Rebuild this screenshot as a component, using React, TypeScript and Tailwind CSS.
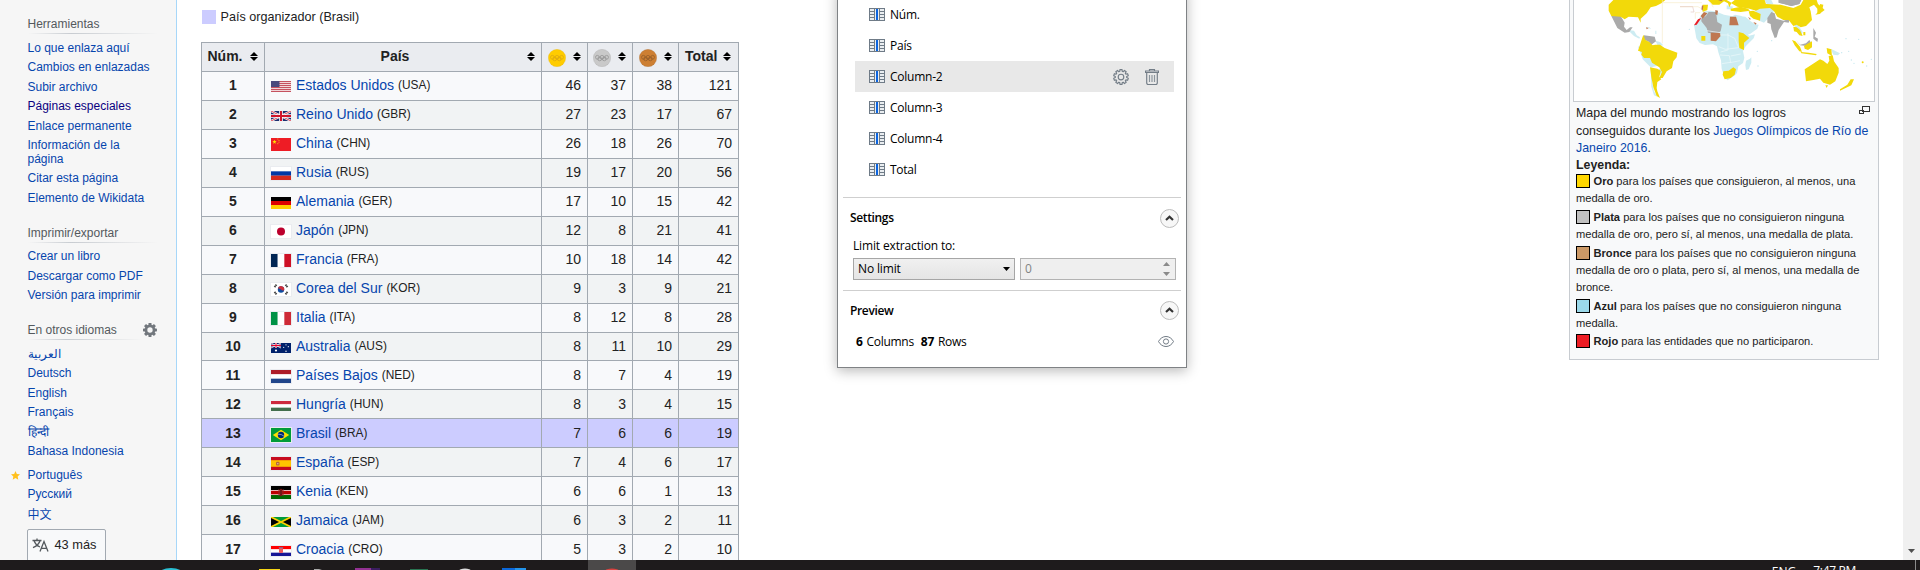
import React from "react";

type SideItem = { label: string; visited?: boolean; lang?: string };

const TOOLS: SideItem[] = [
  { label: "Lo que enlaza aquí" },
  { label: "Cambios en enlazadas" },
  { label: "Subir archivo" },
  { label: "Páginas especiales", visited: true },
  { label: "Enlace permanente" },
  { label: "Información de la página" },
  { label: "Citar esta página" },
  { label: "Elemento de Wikidata" },
];

const PRINT: SideItem[] = [
  { label: "Crear un libro" },
  { label: "Descargar como PDF" },
  { label: "Versión para imprimir" },
];

function SideHeading({ children, short }: { children: React.ReactNode; short?: boolean }) {
  return (
    <div className={short ? "w-[116px]" : "w-[130px]"}>
      <h3 className="h-4 whitespace-nowrap leading-[14px] text-[#54595d]">{children}</h3>
      <div className="h-px bg-gradient-to-r from-[#f6f6f6] via-[#c8ccd1] via-33% to-[#f6f6f6]" />
    </div>
  );
}

function SideLink({ item }: { item: SideItem }) {
  return (
    <li className={`w-[125px] py-[3px] leading-[13.5px] ${item.visited ? "text-[#0b0080]" : "text-[#0645ad]"}`}>
      {item.label}
    </li>
  );
}

function Sidebar() {
  return (
    <aside className="h-full w-[177px] shrink-0 overflow-hidden border-r border-[#a7d7f9] bg-[#f6f6f6] pl-[27.5px] pt-[17px] text-xs">
      <section className="h-[209px]">
        <SideHeading>Herramientas</SideHeading>
        <ul className="pt-[4.9px]">{TOOLS.map((i) => <SideLink key={i.label} item={i} />)}</ul>
      </section>
      <section className="h-[97px]">
        <SideHeading>Imprimir/exportar</SideHeading>
        <ul className="pt-1">{PRINT.map((i) => <SideLink key={i.label} item={i} />)}</ul>
      </section>
      <section>
        <div className="flex justify-between pr-[19px]">
          <SideHeading short>En otros idiomas</SideHeading>
          <svg className="h-[14px] w-[14px]" viewBox="0 0 14 14">
            <g fill="#72777d">
              {[0, 45, 90, 135].map((a) => (
                <rect key={a} x="5.5" y="0" width="3" height="14" rx=".5" transform={`rotate(${a} 7 7)`} />
              ))}
              <circle cx="7" cy="7" r="5.4" />
            </g>
            <circle cx="7" cy="7" r="2.7" fill="#f6f6f6" />
          </svg>
        </div>
        <ul className="pt-[4.9px] text-[#0645ad]">
          <li className="h-[19.5px] py-[3px] leading-[13.5px]">العربية</li>
          <li className="h-[19.5px] py-[3px] leading-[13.5px]">Deutsch</li>
          <li className="h-[19.5px] py-[3px] leading-[13.5px]">English</li>
          <li className="h-[19.5px] py-[3px] leading-[13.5px]">Français</li>
          <li className="h-[19.5px] py-[3px] leading-[13.5px]">हिन्दी</li>
          <li className="h-[19.5px] py-[3px] leading-[13.5px]">Bahasa Indonesia</li>
          <li className="-ml-[17px] mt-[4px] flex h-[19.5px] items-center leading-[13.5px]">
            <svg className="mr-2 h-[9px] w-[9px]" viewBox="0 0 10 10">
              <path d="M5 0l1.5 3.3 3.5.4-2.6 2.4.7 3.6L5 7.9 1.9 9.700l.7-3.600L0 3.700l3.500-.4z" fill="#ffc01f" />
            </svg>
            Português
          </li>
          <li className="h-[19.5px] py-[3px] leading-[13.5px]">Русский</li>
          <li className="h-[24px] pt-[4px] leading-[13.5px]">中文</li>
        </ul>
        <button className="-ml-px flex h-[34px] w-[79px] items-center rounded-[2px] border border-[#a2a9b1] bg-[#f8f9fa] pb-[3px] pl-1 text-[12.8px] text-[#222]">
          <svg className="mr-[6px] mt-[2px] h-4 w-[17px]" viewBox="0 0 17 16" fill="none" stroke="#54595d" strokeWidth="1.3">
            <path d="M.5 3.500h9M5 1.500v2M2 3.500c1 3 3.500 5.500 6 6.500M8.200 3.500C7 7 4 9.500 1 10.700" />
            <path d="M8 14.500l4-10 4 10M9.500 11.300h5.200" />
          </svg>
          43 más
        </button>
      </section>
    </aside>
  );
}

function FlagArt({ code, h }: { code: string; h: number }) {
  const stripes = (c: string[]) =>
    c.map((f, i) => <rect key={i} y={(i * h) / c.length} width="20" height={h / c.length + 0.05} fill={f} />);
  const bars = (c: string[]) => c.map((f, i) => <rect key={i} x={(i * 20) / 3} width="6.8" height={h} fill={f} />);
  switch (code) {
    case "USA":
      return (
        <>
          <rect width="20" height="11" fill="#f1d5d8" />
          {[0, 1, 2, 3, 4, 5].map((i) => <rect key={i} y={i * 2} width="20" height="1" fill="#c5525f" />)}
          <rect width="8.5" height="6" fill="#4a4a7d" />
        </>
      );
    case "GBR":
      return (
        <>
          <rect width="20" height="10" fill="#1d2f6f" />
          <path d="M0 0l20 10M20 0L0 10" stroke="#fff" strokeWidth="2.2" />
          <path d="M0 0l20 10M20 0L0 10" stroke="#cf142b" strokeWidth=".8" />
          <path d="M10 0v10M0 5h20" stroke="#fff" strokeWidth="3.6" />
          <path d="M10 0v10M0 5h20" stroke="#cf142b" strokeWidth="2" />
        </>
      );
    case "CHN":
      return (
        <>
          <rect width="20" height="13" fill="#ee1c25" />
          <path d="M3.500 1.700l.6 1.400 1.500.1-1.200 1 .4 1.500-1.300-.8-1.300.8.4-1.500-1.200-1 1.500-.1z" fill="#ffde00" />
          <path d="M6.300 1h1M7.500 2.500h1M7.500 4.200h1M6.300 5.700h1" stroke="#f7a818" />
        </>
      );
    case "RUS":
      return <>{stripes(["#fff", "#0039a6", "#d52b1e"])}</>;
    case "GER":
      return <>{stripes(["#000", "#d00", "#ffce00"])}</>;
    case "JPN":
      return <><rect width="20" height="13" fill="#fff" /><circle cx="10" cy="6.500" r="4" fill="#bc002d" /></>;
    case "FRA":
      return <>{bars(["#002654", "#fff", "#ce1126"])}</>;
    case "KOR":
      return (
        <>
          <rect width="20" height="13" fill="#fff" />
          <circle cx="10" cy="6.500" r="3.200" fill="#0f4da0" />
          <path d="M6.900 5.700a3.200 3.200 0 016.300 1.200c-1 1.200-2.300.5-3.200-.4s-2.200-1.300-3.100-.8z" fill="#cd2e3a" />
          <path d="M3.500 4.200l2-2.600M16.500 4.200l-2-2.600M3.500 8.800l2 2.600M16.500 8.800l-2 2.600" stroke="#444" strokeWidth="1.900" strokeDasharray="1.500 .3" />
        </>
      );
    case "ITA":
      return <>{bars(["#009246", "#fff", "#ce2b37"])}</>;
    case "AUS":
      return (
        <>
          <rect width="20" height="10" fill="#00216b" />
          <path d="M0 0l10 5M10 0L0 5" stroke="#e9c9d3" strokeWidth="1" />
          <path d="M5 0v5M0 2.500h10" stroke="#fff" strokeWidth="1.800" />
          <path d="M5 0v5M0 2.500h10" stroke="#e4002b" strokeWidth="1" />
          <g fill="#fff"><circle cx="5" cy="7.500" r="1.100" /><circle cx="15" cy="1.800" r=".6" /><circle cx="12.700" cy="4.300" r=".6" /><circle cx="17.300" cy="3.700" r=".6" /><circle cx="15" cy="8.200" r=".7" /></g>
        </>
      );
    case "NED":
      return <>{stripes(["#ae1c28", "#fff", "#21468b"])}</>;
    case "HUN":
      return <>{stripes(["#cd2a3e", "#fff", "#436f4d"])}</>;
    case "BRA":
      return (
        <>
          <rect width="20" height="14" fill="#009b3a" />
          <path d="M1.800 7L10 1.700 18.200 7 10 12.300z" fill="#fedf00" />
          <circle cx="10" cy="7" r="3.200" fill="#002776" />
          <path d="M7 6.200q3.500-.3 6 2" stroke="#cfe0e8" strokeWidth=".6" fill="none" />
        </>
      );
    case "ESP":
      return (
        <>
          <rect width="20" height="13" fill="#c60b1e" /><rect y="3.200" width="20" height="6.600" fill="#ffc400" />
          <rect x="5" y="4.800" width="3.500" height="3.800" rx="1" fill="#b5663a" /><rect x="6.200" y="6" width="1.200" height="1.300" fill="#e8c0a0" />
        </>
      );
    case "KEN":
      return (
        <>
          <rect width="20" height="13" fill="#000" /><rect y="4" width="20" height="5" fill="#fff" /><rect y="9" width="20" height="4" fill="#060" />
          <rect y="4.700" width="20" height="3.700" fill="#b00" />
          <ellipse cx="10" cy="6.500" rx="1.900" ry="3.700" fill="#a11" /><path d="M10 3v7" stroke="#222" strokeWidth=".8" />
          <path d="M7.700 3v7M12.300 3v7" stroke="#7d2c2c" strokeWidth=".6" />
        </>
      );
    case "JAM":
      return (
        <>
          <rect width="20" height="10" fill="#009b3a" /><path d="M0 0l10 5L0 10zM20 0L10 5l10 5z" fill="#000" />
          <path d="M0 0l20 10M20 0L0 10" stroke="#fed100" strokeWidth="1.700" />
        </>
      );
    default:
      return (
        <>
          {stripes(["#f00", "#fff", "#171796"])}
          <rect x="8" y="2" width="4" height="5" rx="1" fill="#f05a5a" /><path d="M7.800 1.800h4.400" stroke="#6a7fb5" strokeWidth="1" />
        </>
      );
  }
}

type Row = [string, string, number, number, number, number, number, number, boolean];
const ROWS: Row[] = [
  ["Estados Unidos", "USA", 46, 37, 38, 121, 10, 11, false],
  ["Reino Unido", "GBR", 27, 23, 17, 67, 11, 10, false],
  ["China", "CHN", 26, 18, 26, 70, 9, 13, false],
  ["Rusia", "RUS", 19, 17, 20, 56, 9, 13, true],
  ["Alemania", "GER", 17, 10, 15, 42, 10, 12, false],
  ["Japón", "JPN", 12, 8, 21, 41, 9, 13, true],
  ["Francia", "FRA", 10, 18, 14, 42, 9, 13, true],
  ["Corea del Sur", "KOR", 9, 3, 9, 21, 9, 13, true],
  ["Italia", "ITA", 8, 12, 8, 28, 9, 13, true],
  ["Australia", "AUS", 8, 11, 10, 29, 11, 10, false],
  ["Países Bajos", "NED", 8, 7, 4, 19, 10, 13, true],
  ["Hungría", "HUN", 8, 3, 4, 15, 12, 10, false],
  ["Brasil", "BRA", 7, 6, 6, 19, 10, 14, true],
  ["España", "ESP", 7, 4, 6, 17, 10, 13, true],
  ["Kenia", "KEN", 6, 6, 1, 13, 10, 13, true],
  ["Jamaica", "JAM", 6, 3, 2, 11, 12, 10, false],
  ["Croacia", "CRO", 5, 3, 2, 10, 12, 10, true],
];

function Sort() {
  return (
    <svg className="h-[9px] w-2 shrink-0" viewBox="0 0 8 9"><path d="M4 0l4 4H0zM0 5h8L4 9z" fill="#000" /></svg>
  );
}

function Medal({ fill, line }: { fill: string; line: string }) {
  return (
    <svg className="mt-[3px] h-[18px] w-[18px]" viewBox="0 0 18 18">
      <circle cx="9" cy="9" r="8.700" fill={fill} stroke={line} strokeOpacity=".4" strokeWidth=".5" />
      <g fill="none" stroke={line} strokeWidth=".7">
        <circle cx="4.400" cy="8.300" r="1.900" /><circle cx="9" cy="8.300" r="1.900" /><circle cx="13.600" cy="8.300" r="1.900" />
        <circle cx="6.700" cy="9.900" r="1.900" /><circle cx="11.300" cy="9.900" r="1.900" />
      </g>
    </svg>
  );
}

const GRID = "grid grid-cols-[63px_277px_46px_45px_46px_61px]";
const CELL = "border-l border-t border-[#a2a9b1]";

function MedalTable() {
  return (
    <div className="w-[538px] text-sm text-[#222]">
      <div className={`${GRID} h-[29px] bg-[#eaecf0] font-bold leading-[20px]`}>
        <div className={`${CELL} flex items-center justify-between pb-[2px] pl-[5.5px] pr-[6px]`}>Núm.<Sort /></div>
        <div className={`${CELL} flex items-center pb-[2px] pr-[6px]`}><span className="flex-1 pr-[2px] text-center">País</span><Sort /></div>
        <div className={`${CELL} flex items-center justify-between pb-[2px] pl-[6px] pr-[6px]`}><Medal fill="#fc0" line="#d9a514" /><Sort /></div>
        <div className={`${CELL} flex items-center justify-between pb-[2px] pl-[5px] pr-[6px]`}><Medal fill="#c9c9c9" line="#8f8f8f" /><Sort /></div>
        <div className={`${CELL} flex items-center justify-between pb-[2px] pl-[6px] pr-[6px]`}><Medal fill="#cd7f32" line="#8f5a28" /><Sort /></div>
        <div className={`${CELL} flex items-center justify-between border-r pb-[2px] pl-[6px] pr-[7px]`}>Total<Sort /></div>
      </div>
      {ROWS.map(([name, code, g, s, b, t, top, h, framed], i) => (
        <div
          key={code}
          className={`${GRID} ${i === 9 ? "h-[28px]" : "h-[29px]"} ${i > 9 ? "leading-[29px]" : "leading-[27px]"} ${
            code === "BRA" ? "bg-[#ccccff]" : i % 2 ? "bg-[#f1f3f4]" : "bg-[#f8f9fb]"
          }`}
        >
          <div className={`${CELL} text-center font-bold`}>{i + 1}</div>
          <div className={`${CELL} flex whitespace-nowrap pl-[6px]`}>
            <svg
              className={`mr-[5px] w-5 shrink-0 ${framed ? "outline outline-1 outline-[#eaecf0]" : ""}`}
              style={{ height: h, marginTop: top - 1 }}
              viewBox={`0 0 20 ${h}`}
            >
              <FlagArt code={code} h={h} />
            </svg>
            <span className="text-[#0645ad]">{name}</span>
            <span className="ml-1 text-[11.9px]">({code})</span>
          </div>
          <div className={`${CELL} pr-[6px] text-right`}>{g}</div>
          <div className={`${CELL} pr-[6px] text-right`}>{s}</div>
          <div className={`${CELL} pr-[6px] text-right`}>{b}</div>
          <div className={`${CELL} border-r pr-[6px] text-right`}>{t}</div>
        </div>
      ))}
    </div>
  );
}

function ColumnIcon() {
  return (
    <svg className="h-[13px] w-4" viewBox="0 0 16 13" shapeRendering="crispEdges">
      <rect width="16" height="13" fill="#6f7b87" />
      <path d="M1 1h4v2H1zM1 4h4v2H1zM1 7h4v2H1zM1 10h4v2H1zM11 1h4v2h-4zM11 4h4v2h-4zM11 7h4v2h-4zM11 10h4v2h-4z" fill="#e9edf0" />
      <rect x="6" y="1" width="4" height="11" fill="#e9edf0" />
      <rect x="7" y="1" width="2" height="11" fill="#0a64e0" />
    </svg>
  );
}

function GearIcon() {
  const pts: string[] = [];
  for (let i = 0; i < 10; i++) {
    const a = (i * Math.PI) / 5 - Math.PI / 2;
    for (const [r, d] of [[5.7, -0.22], [7.4, -0.15], [7.4, 0.15], [5.7, 0.22]]) {
      pts.push(`${8 + r * Math.cos(a + d)},${8 + r * Math.sin(a + d)}`);
    }
  }
  return (
    <svg className="h-4 w-4" viewBox="0 0 16 16" fill="none" stroke="#737d87" strokeWidth="1.150">
      <polygon points={pts.join(" ")} strokeLinejoin="round" />
      <circle cx="8" cy="8" r="2.800" />
    </svg>
  );
}

function TrashIcon() {
  return (
    <svg className="h-4 w-[14px]" viewBox="0 0 14 16" fill="none" stroke="#737d87" strokeWidth="1.150">
      <path d="M.5 3.500V2h13v1.500zM4.500 2V.5h5V2M1.700 3.500v10.600q0 1.400 1.400 1.400h7.800q1.400 0 1.400-1.400V3.500" />
      <path d="M4.500 6v7M7 6v7M9.500 6v7" stroke="#8c959d" />
    </svg>
  );
}

function CollapseButton() {
  return (
    <button className="flex h-[19px] w-[19px] items-center justify-center rounded-full border border-[#bcbcbc] bg-[#f7f7f7]">
      <svg className="h-[7px] w-[9px]" viewBox="0 0 9 7" fill="none" stroke="#333" strokeWidth="2.200"><path d="M1 5l3.500-3.200L8 5" /></svg>
    </button>
  );
}

function ExtractionDialog() {
  const cols = ["Núm.", "País", "Column-2", "Column-3", "Column-4", "Total"];
  return (
    <div className="absolute -top-3 left-[837px] h-[380px] w-[350px] border border-[#7f8285] bg-white px-[5px] pt-[10px] font-['Open_Sans','Noto_Sans',sans-serif] text-xs text-black shadow-[0_3px_12px_rgba(0,0,0,0.28)]">
      <ul className="h-[198px] pl-3 pr-[7px]">
        {cols.map((c, i) => (
          <li key={c} className={`flex h-[31px] items-center pl-[14px] pr-[15px] tracking-[-0.25px] ${i === 2 ? "bg-[#e8e8e8]" : ""}`}>
            <ColumnIcon />
            <span className="ml-[5px] flex-1">{c}</span>
            {i === 2 && <span className="flex items-center gap-4"><GearIcon /><TrashIcon /></span>}
          </li>
        ))}
      </ul>
      <section className="h-[93px] border-t border-[#cfcfcf] px-[7px] pt-[10px]">
        <div className="flex h-5 items-center justify-between">
          <h2 className="font-semibold tracking-[-0.35px]">Settings</h2>
          <div className="-mr-[5px]"><CollapseButton /></div>
        </div>
        <div className="pl-[3px] pt-[7px] leading-[22px] tracking-[-0.15px]">Limit extraction to:</div>
        <div className="-mr-[5px] flex gap-[5px] pl-[3px] pt-[1px]">
          <div className="flex h-[22px] w-[162px] shrink-0 items-center justify-between border border-[#a6a6a6] bg-gradient-to-b from-[#f0f0f0] to-[#e5e5e5] pl-1 pr-1">
            <span className="tracking-[-0.15px]">No limit</span>
            <svg className="h-1 w-[7px]" viewBox="0 0 7 4"><path d="M0 0h7L3.500 4z" fill="#000" /></svg>
          </div>
          <div className="flex h-[22px] w-[156px] shrink-0 items-center justify-between border border-[#b3b3b3] bg-[#efefef] pl-1 pr-[5px] text-[#838383]">
            0
            <svg className="h-[14px] w-[7px]" viewBox="0 0 7 14" fill="#8a8a8a"><path d="M0 4h7L3.500 0zM0 10h7l-3.500 4z" /></svg>
          </div>
        </div>
      </section>
      <section className="border-t border-[#cfcfcf] px-[7px] pt-[9.5px]">
        <div className="flex h-5 items-center justify-between">
          <h2 className="font-semibold tracking-[-0.35px]">Preview</h2>
          <div className="-mr-[5px]"><CollapseButton /></div>
        </div>
        <div className="flex items-center justify-between pl-[6px] pt-[12px] leading-[18px] tracking-[-0.3px]">
          <span className="flex"><b className="mr-1">6</b>Columns<b className="ml-[7px] mr-1">87</b>Rows</span>
          <svg className="h-[11px] w-4" viewBox="0 0 16 11" fill="none" stroke="#737d87">
            <path d="M.5 5.500C4-1.200 12-1.200 15.500 5.500 12 12.200 4 12.200.5 5.500z" /><circle cx="8" cy="5.500" r="2.600" />
          </svg>
        </div>
      </section>
    </div>
  );
}

function WorldMap() {
  return (
    <svg className="h-[101px] w-[300px] bg-white" viewBox="42 0 900 303">
      <g fill="#cdecf2">
        <path d="M402 75l12-15 10-16 10-10 18-2 20 4 20 8 25 5 8-5 20 4 2 25 12 22 8 12 18-4-4 12-24 24-8 14 4 20-4 16-14 10-4 20-8 8-20 14-8-6-10-28-2-26 -8-24-4-18-12-6-24 2-16-6-10-14z" />
        <path d="M558 182l12-6 4-4 0 16-8 20-8 2-2-14zM536 48l20 2 14 12 14 10 12 2-4 12-22 16-14 4-10-14-10-28z" />
        <path d="M578 24l30-10 30 8 4 12-14 18-16 16-14-6-14-34zM500 16l20 4-6 8-14 0zM614 0h20l6 12-18 4zM700 70l12 2 16 24-4 10-12-14zM812 146l28 14-6 6-14-2zM286 122l14 4 10 10-16 2z" />
        <path d="M234 140l20-4 10 26 20 8 10 14-4 14-16 4 2 22 0 20 6 30 10 16-10-4-8-26-2-58-24-24-6-18zM296 206l10 0 4 16-8 6zM204 90l18 2 8 14 10 6-2 4-16-8z" />
        <path d="M262 82l6 0 6 4-12-2zM286 92h3v10h-3z" />
      </g>
      <g fill="#aaa">
        <path d="M154 46l28 2 12 20-2 12 8 10 10-8 8 0-10 14-14 2-22-14-18-36z" />
        <path d="M252 106l32 4 4 14-14 10-10-10-12-4zM424 56l14-8 8-12 22 0 4 30 14 8-4 20-12 8-26-4-4-14-16-20z" />
        <path d="M622 54l12-18 10 4 4 16 22 6 20-6-4 12-14-2-16 24-6 22-6 2-10-26-2-16-10-4zM656 0h68l-6 12-24 6-22-6-16-4zM708 120l12 14 18-4 10-10 4 6-12 12-20-2zM760 84l8 14-4 12 10 6-2 10-12-10z" />
      </g>
      <g fill="#f2d90a">
        <path d="M160 0h156l-12 10-16 8-16 4-12 18-18 16 0 12-8-16-28-2-12 8-12-8-28-2-8-16 0-18zM250 104l6 16 12 6 10 10 8-2 14 0 14 10 38 14-2 14-10 12-4 20-16 10-12 20-10 0 8-18-8-14-22-14-6-14-18 0-8-10 2-8-12-4z" />
        <path d="M270 202l22 4 10 6-2 10-2 8 6 8-12 8-2 18 2 10 8 20-10-6-10-26-6-30z" />
        <path d="M428 14l16 0-2 16-14 6zM444 0h56l14 8 10-8h90l4 12 44 2 38 10 22-10 8-14h40l4 12 10 8-2 20-10 2 0-16-10-12-14 8 4 12 4 26-18 18-16 4-12-8-10 4-14-18-16 0-18-10-10-16 -12-10-30 2-12 6-20-6-36-6-18-10-6 12-4-12-12-6-14 10-20 0z" />
        <path d="M512 26l30-6 22 6 6 6-28 4-30-4zM566 34l14-2 22 10-2 20-20-6-10-8zM536 96l14 4 18 14-16 14 0 22-14-6-2-20zM424 108h12v14h-12zM490 214l16-2 14-10 8 6-4 16-12 10-18 4-6-14z" />
        <path d="M734 208l30-20 16-10 10 4 12 10 6-10-2-14 12-2 4 18 14 20 0 14-10 26-16 10-20-6-10-12-20 4-22 4zM872 238h10l-8 18-34 16 0-4 22-14zM796 256l8 0-4 8zM700 80l10 2 10 8 8 18-10-2-8-10-8-2zM696 120l10 4 14 16 6 16-8-2-14-18zM732 138l16-10 8-4 0 18-12 8-10-4zM722 156l24 2 24 4-2 4-44-6zM800 144l14 4 2 20-14-8zM730 96h6v10h-6zM780 12l10 2-2 10 6 6-16 12-12 2 12-12z" />
      </g>
      <g fill="#bf7751">
        <path d="M422 48l10-12 10 4-14 16zM426 16l4 2-2 14-4-4zM452 98l28 0 2 10-14 16-16-2zM510 50h18l8 26h-28zM466 30l8 2-2 14-6-4zM564 50l8 6-2 4zM580 66l10 4-4 4zM258 82l8 2-6 4zM474 0h14l-4 4z" />
      </g>
      <path d="M402 76l12-18 10-4-14 20z" fill="#ed1c24" />
      <path d="M656 0h68l-6 12-24 6-22-6-16-4z" fill="#aaa" />
      <path d="M307 0v130M360 20h54l10 6M406 56V38h14M306 8h120M450 6l10 16" fill="none" stroke="#f5e9c4" strokeWidth="1.800" />
      <path d="M360 20h38l4 16h-10" fill="none" stroke="#e0c2bc" strokeWidth="1.800" />
      <path d="M480 105l24 0 20 10 12 28-40 5-20-8M504 100v50l-22 6M480 165l28 2 4 20-26 4M512 168l30-6M510 188l30-6M440 92l40 6" fill="none" stroke="#eef9fb" strokeWidth="2" />
      <g fill="#c3e7ef"><circle cx="592" cy="154" r="2" /><circle cx="635" cy="122" r="2" /><circle cx="594" cy="198" r="2" /><circle cx="858" cy="116" r="2" /><circle cx="896" cy="118" r="2" /><circle cx="845" cy="158" r="2" /><circle cx="866" cy="154" r="2" /><circle cx="874" cy="180" r="2" /><circle cx="882" cy="190" r="2" /><circle cx="920" cy="198" r="2" /><circle cx="934" cy="178" r="2" /><circle cx="388" cy="88" r="2" /></g>
      <circle cx="908" cy="187" r="3" fill="#f2d90a" />
    </svg>
  );
}

function Legend({ color, name, gap, children }: { color: string; name: string; gap: string; children: React.ReactNode }) {
  return (
    <div className={`whitespace-nowrap text-[11.12px] leading-[17px] ${gap}`}>
      <span className={`mr-[3.5px] inline-block h-[14px] w-[14px] border border-black align-[-3px] ${color}`} />
      <b>{name}</b> {children}
    </div>
  );
}

function MapBox() {
  return (
    <figure className="mr-6 h-[360px] w-[310px] shrink-0 border border-t-0 border-[#c8ccd1] bg-[#f8f9fa] px-[3px] text-[12.35px] text-[#222]">
      <div className="h-[102px] w-[302px] border border-t-0 border-[#c8ccd1]"><WorldMap /></div>
      <figcaption className="pl-[3px] pt-[2px]">
        <div className="flex justify-between pr-1 leading-[17.5px]">
          <p className="whitespace-nowrap pt-[1px]">
            Mapa del mundo mostrando los logros<br />
            conseguidos durante los <span className="text-[#0645ad]">Juegos Olímpicos de Río de<br />Janeiro 2016</span>.
          </p>
          <svg className="-ml-4 mr-px mt-[2px] h-[9px] w-[11px] shrink-0" viewBox="0 0 11 9" fill="#f8f9fa" stroke="#333" shapeRendering="crispEdges">
            <path d="M3.500.5h7v5h-7zM.5 4.500h4v3h-4z" />
          </svg>
        </div>
        <b className="block h-[15.5px] leading-[15px]">Leyenda:</b>
        <Legend color="bg-[#ffd700]" name="Oro" gap="h-[36px]">para los países que consiguieron, al menos, una<br />medalla de oro.</Legend>
        <Legend color="bg-[#c0c0c0]" name="Plata" gap="h-[36px]">para los países que no consiguieron ninguna<br />medalla de oro, pero sí, al menos, una medalla de plata.</Legend>
        <Legend color="bg-[#cc9966]" name="Bronce" gap="h-[53px]">para los países que no consiguieron ninguna<br />medalla de oro o plata, pero sí, al menos, una medalla de<br />bronce.</Legend>
        <Legend color="bg-[#9bd9ea]" name="Azul" gap="h-[35px]">para los países que no consiguieron ninguna<br />medalla.</Legend>
        <Legend color="bg-[#ed1c24]" name="Rojo" gap="h-[18px]">para las entidades que no participaron.</Legend>
      </figcaption>
    </figure>
  );
}

function Taskbar() {
  return (
    <footer className="flex h-[10px] overflow-hidden bg-[#1e1b1c] font-['Open_Sans','Noto_Sans',sans-serif] text-xs text-white">
      <svg className="h-[10px] w-[700px]" viewBox="0 0 700 10">
        <rect x="588" width="48" height="10" fill="#4b4949" />
        <ellipse cx="171" cy="16" rx="14" ry="8" fill="#2bc0d4" />
        <rect x="259" y="9" width="21" height="1" fill="#f5d515" />
        <path d="M314 9h5l3 1h-8z" fill="#aaa" />
        <path d="M355 8h16v2h-16z" fill="#933193" /><path d="M371 8h9v2h-9z" fill="#3b1d60" />
        <rect x="410" y="9" width="18" height="1" fill="#297552" />
        <ellipse cx="465" cy="11" rx="6" ry="2.500" fill="#ddd" />
        <path d="M502 8h13v2h-13z" fill="#0b68da" /><path d="M515 8h11v2h-11z" fill="#2394ea" />
        <ellipse cx="612" cy="11" rx="7" ry="2.500" fill="#d84340" />
      </svg>
      <div className="ml-auto flex h-[10px] pr-1 leading-4">
        <span className="mr-[17px] pt-[4px]">ENG</span>
        <span className="mr-[59px] pt-[2.5px] tracking-[-0.3px]">7:47 PM</span>
        <span className="h-[10px] w-px bg-[#8a8a8a]" />
      </div>
    </footer>
  );
}

export default function App() {
  return (
    <div className="relative h-[570px] w-[1920px] overflow-hidden bg-white font-['Liberation_Sans','Noto_Sans_CJK_SC',sans-serif]">
      <div className="flex h-[560px] overflow-hidden">
        <Sidebar />
        <main className="flex h-full flex-1 justify-between pl-6">
          <div className="pt-[10px]">
            <div className="mb-[18px] ml-px flex h-[14px] items-center text-[12.6px] text-[#222]">
              <span className="mr-[4.5px] h-[14px] w-[14px] bg-[#ccccff]" />
              País organizador (Brasil)
            </div>
            <MedalTable />
          </div>
          <MapBox />
        </main>
        <div className="flex w-[17px] shrink-0 items-end justify-center bg-[#f0f0f0] pb-[7px]">
          <svg className="h-1 w-[7px]" viewBox="0 0 7 4"><path d="M0 0h7L3.500 4z" fill="#505050" /></svg>
        </div>
      </div>
      <ExtractionDialog />
      <Taskbar />
    </div>
  );
}
